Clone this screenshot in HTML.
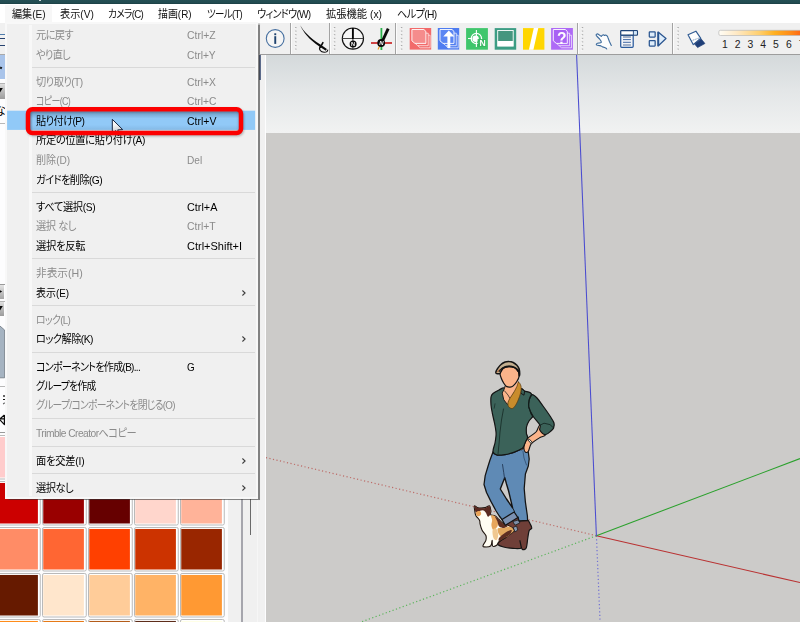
<!DOCTYPE html>
<html lang="ja">
<head>
<meta charset="utf-8">
<title>SketchUp</title>
<style>
*{margin:0;padding:0;box-sizing:border-box}
html,body{width:800px;height:622px;overflow:hidden;background:#f0f0f0}
body{font-family:'Liberation Sans','Noto Sans CJK JP',sans-serif;font-size:11.2px;color:#000;font-feature-settings:'palt';-webkit-font-smoothing:antialiased}
#app{position:absolute;left:0;top:0;width:800px;height:622px;overflow:hidden;background:#f0f0f0}
#app>*,#menu>*,#tb>*{position:absolute}
.r{display:inline-block;white-space:pre;vertical-align:top;overflow:visible}
.r>span{display:inline-block;transform-origin:0 50%;white-space:pre}
#title{left:0;top:0;width:800px;height:3.8px;background:linear-gradient(to bottom,#244f54 0,#224c51 60%,#1b3f44 100%)}
#mbar{left:0;top:4px;width:800px;height:19px;background:#fff}
#mbhot{left:5.3px;top:4.6px;width:46.4px;height:17px;background:#f7f7f7}
.mb{top:5.2px;height:18px;line-height:18px;white-space:nowrap;color:#111}
#tb{left:0;top:0;width:800px;height:60px}
#tbbg{left:0;top:22.8px;width:800px;height:31.4px;background:#f0f0f0}
#tbline{left:260px;top:53.9px;width:540px;height:1px;background:#9d9d9d}
.tsep{top:23.2px;width:2px;height:30.6px;border-left:1px solid #a3a3a3;border-right:1px solid #fcfcfc}
.grip{top:26.5px;width:1.8px;height:24px;background:repeating-linear-gradient(to bottom,#b8b8b8 0 1.3px,transparent 1.3px 3.55px)}
.num{top:38.5px;width:10px;text-align:center;font-size:10.4px;line-height:12px;color:#222;font-family:'Liberation Sans',sans-serif}
#vp{left:265.4px;top:55px;width:534.6px;height:567px;background:#cccbc9}
#sky{left:265.4px;top:55px;width:534.6px;height:78px;background:linear-gradient(to bottom,#d4d9db 0%,#e3e6e7 45%,#f1f2f2 100%)}
#scene{left:0;top:0;width:800px;height:622px}
#lp{left:0;top:23px;width:266px;height:599px;background:#fdfdfe}
#menu{left:4.6px;top:22.4px;width:253.5px;height:476.6px;background:#f0f0f0;border:2.5px solid #f8f8f8;box-shadow:2.3px 1.4px 1px rgba(50,50,50,.58)}
#mlayer{left:0;top:0;width:800px;height:622px;pointer-events:none}
#mlayer>*{position:absolute}
#gut{left:29.2px;top:25px;width:2.8px;height:471px;background:#f8f8f8}
.mi{height:18px;line-height:18px;white-space:nowrap;color:#000}
.mi.dis{color:#8b8b8b}
.sep{left:32px;width:223px;height:1.2px;background:#d9d9d9}
.arr{overflow:visible}
#hl{left:0;top:0;width:270px;height:140px}

</style>
</head>
<body>
<div id="app">
<div id="vp"></div>
<div id="sky"></div>
<svg id="scene" viewBox="0 0 800 622" width="800" height="622">
<g fill="none" stroke-linecap="butt">
<line x1="596.4" y1="535.7" x2="265.4" y2="457.5" stroke="#bd6e6a" stroke-width="1.2" stroke-dasharray="1.2 2.4"/>
<line x1="596.4" y1="535.7" x2="360" y2="622.4" stroke="#5ab45a" stroke-width="1.2" stroke-dasharray="1.2 2.4"/>
<line x1="596.4" y1="535.7" x2="600.1" y2="622" stroke="#7070d4" stroke-width="1.2" stroke-dasharray="1.2 2.4"/>
<line x1="596.4" y1="535.7" x2="800" y2="582.6" stroke="#b93232" stroke-width="1.05"/>
<line x1="596.4" y1="535.7" x2="800" y2="458.6" stroke="#2aa12c" stroke-width="1.05"/>
<line x1="576.6" y1="55" x2="596.4" y2="535.7" stroke="#4a4cd0" stroke-width="1.05"/>
</g>

<path d="M498.5 542.5 C499.7 541.4 502.6 539.3 505.0 538.0 C507.4 536.7 510.8 535.6 513.0 534.8 C515.2 534.0 517.2 532.1 518.5 533.0 C519.8 533.9 520.5 537.5 521.0 540.0 C521.5 542.5 522.8 546.4 521.5 547.8 C520.2 549.2 516.0 548.5 513.0 548.4 C510.0 548.3 506.0 547.6 503.5 547.0 C501.0 546.4 498.8 545.5 498.0 544.8 C497.2 544.0 497.3 543.6 498.5 542.5 Z" fill="#6f3f38" stroke="#141414" stroke-width="1.2" stroke-linejoin="round" stroke-linecap="round"/>
<path d="M517.0 525.5 C517.2 523.4 517.8 522.0 519.5 521.0 C521.2 520.0 525.4 519.3 527.2 519.8 C529.0 520.3 529.4 522.6 530.2 524.0 C531.0 525.4 532.0 527.1 531.8 528.2 C531.6 529.3 529.9 528.8 529.2 530.4 C528.5 532.0 528.3 535.1 527.8 538.0 C527.3 540.9 527.1 546.1 526.2 548.0 C525.3 549.9 523.1 549.9 522.2 549.2 C521.3 548.5 521.2 546.6 520.6 544.0 C520.0 541.4 519.0 536.6 518.4 533.5 C517.8 530.4 516.8 527.6 517.0 525.5 Z" fill="#6f3f38" stroke="#141414" stroke-width="1.2" stroke-linejoin="round" stroke-linecap="round"/>
<polygon points="505.0,538.0 507.0,528.0 505.0,523.0 512.8,518.0 519.5,518.0 522.0,528.0 521.0,540.0 513.0,542.0" fill="#6f3f38" />
<polygon points="512.8,521.5 519.0,519.8 519.8,523.0 515.0,525.2" fill="#7d8fa8" stroke="#141414" stroke-width="0.72" stroke-linejoin="round"/>
<polygon points="513.2,527.5 516.5,526.0 517.8,530.0 514.8,532.0" fill="#8a9bb2" stroke="#141414" stroke-width="0.72" stroke-linejoin="round"/>
<path d="M474.4 505.8 C475.0 505.3 476.4 507.6 478.2 507.9 C480.0 508.2 483.2 508.0 485.1 507.6 C487.0 507.3 488.5 505.1 489.5 505.8 C490.5 506.4 490.7 509.9 490.9 511.4 C491.0 512.9 489.7 513.9 490.4 514.7 C491.1 515.4 493.7 515.1 495.2 515.9 C496.6 516.8 497.8 518.5 499.2 519.7 C500.5 520.9 501.3 522.1 503.2 523.2 C505.0 524.3 508.4 525.2 510.2 526.5 C512.0 527.7 514.0 529.2 514.0 530.5 C514.0 531.8 511.7 533.0 510.2 534.2 C508.7 535.5 507.0 536.5 505.2 537.8 C503.3 539.0 500.6 540.3 499.2 541.5 C497.7 542.8 497.7 544.5 496.7 545.3 C495.6 546.0 493.4 546.9 492.6 546.0 C491.9 545.2 492.5 540.3 492.1 540.3 C491.8 540.3 492.0 544.9 490.6 546.0 C489.3 547.1 485.4 547.0 484.1 546.9 C482.9 546.8 482.8 546.4 483.1 545.3 C483.4 544.2 485.4 541.9 485.9 540.3 C486.3 538.6 486.5 537.2 485.9 535.5 C485.2 533.8 483.1 532.1 482.1 530.2 C481.1 528.3 480.5 525.9 480.1 524.2 C479.7 522.5 480.2 521.7 479.5 520.2 C478.8 518.7 476.6 517.1 475.8 515.4 C475.0 513.8 474.9 512.0 474.7 510.4 C474.5 508.8 473.9 506.2 474.4 505.8 Z" fill="#fffdf2" stroke="#1e140e" stroke-width="1.08" stroke-linejoin="round" stroke-linecap="round"/>
<path d="M474.8 506.1 C475.2 505.4 476.6 507.9 478.3 508.1 C480.1 508.4 483.3 508.2 485.1 507.9 C487.0 507.6 488.5 505.5 489.4 506.1 C490.3 506.7 490.5 510.0 490.6 511.4 C490.8 512.8 490.6 513.8 490.1 514.7 C489.7 515.5 488.6 517.0 487.9 516.7 C487.2 516.3 486.6 513.7 485.9 512.7 C485.1 511.6 484.4 510.7 483.4 510.4 C482.3 510.1 480.8 510.6 479.6 510.9 C478.3 511.2 476.6 513.2 475.8 512.4 C475.0 511.6 474.4 506.8 474.8 506.1 Z" fill="#5a2a20" />
<path d="M476.1 512.2 C476.7 511.5 479.3 510.8 480.1 511.2 C480.9 511.5 481.3 513.3 481.1 514.2 C480.9 515.0 479.6 516.0 478.8 516.2 C478.1 516.3 477.0 515.8 476.6 515.2 C476.1 514.5 475.5 512.8 476.1 512.2 Z" fill="#eaa458" />
<path d="M491.1 515.4 C491.7 514.8 494.3 515.4 495.4 516.4 C496.5 517.4 497.6 519.7 497.9 521.4 C498.2 523.2 497.9 525.3 497.2 526.7 C496.4 528.1 494.4 530.2 493.4 530.0 C492.4 529.7 491.6 526.8 491.4 525.2 C491.2 523.6 492.2 521.8 492.1 520.2 C492.1 518.6 490.6 516.0 491.1 515.4 Z" fill="#e8a65c" />
<path d="M494.9 516.2 C495.2 515.9 497.8 518.7 499.2 519.9 C500.5 521.2 501.8 522.5 503.2 523.5 C504.6 524.4 507.5 525.0 507.7 525.7 C507.9 526.5 505.6 527.8 504.2 528.0 C502.8 528.1 500.3 527.5 499.2 526.5 C498.0 525.4 498.1 523.2 497.4 521.4 C496.7 519.7 494.6 516.4 494.9 516.2 Z" fill="#5e2e22" />
<path d="M497.7 528.7 C498.4 527.5 502.1 528.3 504.2 528.0 C506.3 527.6 508.6 526.3 510.2 526.7 C511.8 527.1 513.7 529.3 513.7 530.5 C513.7 531.7 511.6 532.9 510.2 534.0 C508.8 535.1 506.9 537.0 505.2 537.3 C503.4 537.5 500.9 536.7 499.7 535.2 C498.4 533.8 496.9 529.9 497.7 528.7 Z" fill="#e2a860" />
<path d="M499.2 537.8 C500.1 536.4 503.1 534.0 505.2 532.7 C507.2 531.4 510.6 529.8 511.5 530.0 C512.3 530.2 511.3 532.7 510.2 534.0 C509.2 535.2 507.0 536.3 505.2 537.5 C503.4 538.7 500.4 541.0 499.4 541.0 C498.4 541.1 498.2 539.1 499.2 537.8 Z" fill="#5e2e22" />
<path d="M492.6 530.2 C493.1 528.8 495.5 528.1 496.4 529.0 C497.3 529.8 498.2 533.4 498.2 535.2 C498.2 537.1 497.2 539.8 496.4 540.3 C495.6 540.7 494.0 539.4 493.4 537.8 C492.8 536.1 492.1 531.7 492.6 530.2 Z" fill="#f0c890" />
<polygon points="493.0,452.0 490.0,460.0 488.1,466.0 485.2,475.6 484.0,484.5 486.5,492.5 490.9,501.4 496.1,511.0 499.3,516.0 502.5,520.2 506.0,523.6 518.0,517.0 519.0,521.0 527.6,520.5 527.4,516.0 525.4,502.2 524.2,488.5 525.4,474.0 528.3,466.0 529.2,459.0 528.2,451.5 523.0,447.6 520.0,449.6 513.0,452.6 505.0,454.6 497.0,455.0" fill="#5f8ab5" stroke="#141414" stroke-width="1.26" stroke-linejoin="round"/>
<polygon points="504.8,477.6 500.3,489.0 506.5,499.0 512.6,507.8 508.6,491.0 506.5,484.0" fill="#cccbc9" stroke="#141414" stroke-width="1.38" stroke-linejoin="round"/>
<polyline points="502.5,464.5 503.7,472.4 504.5,478.1" fill="none" stroke="#1b2f4a" stroke-width="0.8" stroke-linejoin="round" stroke-linecap="round"/>
<polyline points="512.6,507.8 514.5,511.5" fill="none" stroke="#141414" stroke-width="0.9" stroke-linejoin="round" stroke-linecap="round"/>
<polyline points="523.0,451.5 524.0,458.0 526.5,465.0" fill="none" stroke="#2a4566" stroke-width="0.7" stroke-linejoin="round" stroke-linecap="round"/>
<polygon points="502.0,519.6 514.1,511.9 517.9,517.6 505.3,525.3" fill="#7b91b1" stroke="#141414" stroke-width="1.14" stroke-linejoin="round"/>
<path d="M540.0 425.2 C541.6 425.6 545.5 432.4 545.5 434.5 C545.5 436.6 542.2 436.1 540.0 437.5 C537.8 438.9 533.7 441.5 532.0 443.0 C530.3 444.5 530.6 445.1 530.0 446.5 C529.4 447.9 529.0 450.6 528.2 451.5 C527.5 452.4 526.2 452.6 525.5 452.2 C524.8 451.8 524.1 450.4 524.0 449.0 C523.9 447.6 524.0 445.8 524.6 444.0 C525.2 442.2 525.6 440.5 527.5 438.5 C529.4 436.5 533.9 434.2 536.0 432.0 C538.1 429.8 538.4 424.8 540.0 425.2 Z" fill="#fbb48a" stroke="#141414" stroke-width="1.08" stroke-linejoin="round" stroke-linecap="round"/>
<polygon points="527.8,439.8 529.0,438.8 532.2,442.2 531.0,443.4" fill="#efe9dc" stroke="#141414" stroke-width="0.84" stroke-linejoin="round"/>
<path d="M519.8 447.8 C519.9 447.4 520.7 447.1 521.2 447.2 C521.7 447.3 522.6 448.0 522.8 448.4 C523.0 448.8 522.8 449.6 522.4 449.8 C522.0 450.0 520.9 449.9 520.5 449.6 C520.1 449.3 519.7 448.2 519.8 447.8 Z" fill="#fbb48a" stroke="#141414" stroke-width="0.72" stroke-linejoin="round" stroke-linecap="round"/>
<path d="M504.5 388.0 C502.2 387.5 500.9 389.1 499.0 390.0 C497.1 390.9 494.3 392.3 493.0 393.5 C491.7 394.7 491.3 395.1 491.0 397.0 C490.7 398.9 490.8 402.2 491.0 405.0 C491.2 407.8 491.9 411.0 492.5 414.0 C493.1 417.0 493.9 420.0 494.5 423.0 C495.1 426.0 495.8 429.8 496.0 432.0 C496.2 434.2 496.2 434.2 496.0 436.0 C495.8 437.8 495.5 440.4 495.0 443.0 C494.5 445.6 492.7 449.6 493.0 451.6 C493.3 453.6 495.0 454.5 497.0 455.0 C499.0 455.5 502.3 455.0 505.0 454.6 C507.7 454.2 510.5 453.4 513.0 452.6 C515.5 451.8 518.3 450.4 520.0 449.6 C521.7 448.8 522.1 448.9 523.0 447.6 C523.9 446.3 524.8 443.6 525.5 442.0 C526.2 440.4 527.2 439.2 527.5 438.0 C527.8 436.8 527.2 435.7 527.0 435.0 C526.8 434.3 526.6 435.3 526.5 434.0 C526.4 432.7 526.1 429.2 526.5 427.0 C526.9 424.8 527.9 422.8 529.0 421.0 C530.1 419.2 532.7 417.3 533.0 416.0 C533.3 414.7 531.2 416.5 531.0 413.0 C530.8 409.5 533.1 398.7 532.0 395.0 C530.9 391.3 526.3 392.1 524.5 391.0 C522.7 389.9 522.9 388.2 521.0 388.5 C519.1 388.8 515.8 393.1 513.0 393.0 C510.2 392.9 506.8 388.5 504.5 388.0 Z" fill="#3b6259" stroke="#141414" stroke-width="1.2" stroke-linejoin="round" stroke-linecap="round"/>
<path d="M532.0 394.6 C533.3 394.3 535.2 396.1 537.0 398.0 C538.8 399.9 540.8 403.0 543.0 406.0 C545.2 409.0 548.2 413.2 550.0 416.0 C551.8 418.8 553.4 421.0 554.0 423.0 C554.6 425.0 554.1 426.7 553.6 428.0 C553.1 429.3 552.4 429.9 551.0 431.0 C549.6 432.1 547.1 434.8 545.2 434.6 C543.3 434.4 540.7 431.6 539.8 430.0 C538.9 428.4 541.1 427.5 540.0 425.2 C538.9 422.9 534.9 419.2 533.0 416.2 C531.1 413.2 529.4 409.7 528.8 407.0 C528.2 404.3 528.7 402.1 529.2 400.0 C529.7 397.9 530.7 394.9 532.0 394.6 Z" fill="#3b6259" stroke="#141414" stroke-width="1.2" stroke-linejoin="round" stroke-linecap="round"/>
<polyline points="540.0,425.2 544.0,423.2 550.0,424.6 553.6,428.0" fill="none" stroke="#10211d" stroke-width="0.8" stroke-linejoin="round" stroke-linecap="round"/>
<polyline points="532.0,395.0 529.0,400.0 528.5,407.0 531.0,413.0 533.0,416.0" fill="none" stroke="#10211d" stroke-width="0.8" stroke-linejoin="round" stroke-linecap="round"/>
<polyline points="503.5,409.0 501.5,420.0 500.0,432.0 499.2,442.0 498.0,454.0" fill="none" stroke="#10211d" stroke-width="0.7" stroke-linejoin="round" stroke-linecap="round"/>
<polyline points="495.0,403.8 494.2,408.2" fill="none" stroke="#10211d" stroke-width="0.6" stroke-linejoin="round" stroke-linecap="round"/>
<polygon points="505.0,386.0 513.5,386.8 518.0,381.0 519.8,389.0 514.5,391.0 510.0,398.5 507.2,404.2 503.8,399.8 502.2,393.0 504.5,388.5" fill="#fbb48a" />
<polyline points="505.0,386.2 504.5,388.5 502.2,393.0 503.8,399.8 507.2,404.2" fill="none" stroke="#141414" stroke-width="0.9" stroke-linejoin="round" stroke-linecap="round"/>
<polyline points="504.5,390.8 508.0,395.0 510.0,398.5" fill="none" stroke="#141414" stroke-width="0.7" stroke-linejoin="round" stroke-linecap="round"/>
<polygon points="521.0,388.5 524.6,391.0 524.0,395.2 520.8,393.2" fill="#3b6259" stroke="#141414" stroke-width="0.96" stroke-linejoin="round"/>
<path d="M518.5 382.0 C519.2 382.0 520.6 384.4 521.0 386.2 C521.4 388.0 521.1 390.7 520.6 393.0 C520.1 395.3 519.1 397.9 518.2 400.0 C517.3 402.1 516.2 404.4 515.2 405.8 C514.2 407.2 513.1 408.5 512.0 408.6 C510.9 408.7 509.3 407.6 508.6 406.6 C507.9 405.6 507.8 404.0 508.0 402.6 C508.2 401.2 509.0 400.0 510.0 398.2 C511.0 396.4 512.8 394.0 514.0 392.0 C515.2 390.0 516.2 387.9 517.0 386.2 C517.8 384.5 517.8 382.0 518.5 382.0 Z" fill="#c98c2c" stroke="#5a3a10" stroke-width="0.72" stroke-linejoin="round" stroke-linecap="round"/>
<path d="M500.1 373.2 C499.7 374.9 500.7 376.5 501.3 378.2 C501.9 379.9 503.0 381.9 503.8 383.2 C504.7 384.6 505.3 385.7 506.3 386.4 C507.4 387.0 508.9 387.2 510.1 387.1 C511.2 387.0 512.1 386.8 513.2 385.9 C514.4 384.9 516.0 383.0 517.0 381.3 C518.0 379.7 519.0 377.5 519.2 375.7 C519.4 373.9 519.0 372.0 518.2 370.7 C517.5 369.3 516.1 368.2 514.5 367.5 C512.9 366.9 510.7 366.5 508.8 366.6 C507.0 366.7 504.7 367.1 503.2 368.2 C501.7 369.3 500.4 371.5 500.1 373.2 Z" fill="#fbb48a" stroke="#141414" stroke-width="1.2" stroke-linejoin="round" stroke-linecap="round"/>
<path d="M495.8 372.4 C495.8 371.6 496.7 370.0 497.5 368.7 C498.4 367.4 499.4 365.8 500.7 364.7 C501.9 363.6 503.7 362.6 505.1 362.0 C506.5 361.5 507.8 361.4 509.2 361.5 C510.5 361.5 511.9 361.9 513.2 362.5 C514.5 363.2 515.9 364.3 516.9 365.3 C517.8 366.3 518.6 367.3 519.1 368.7 C519.5 370.1 519.7 372.6 519.7 373.8 C519.7 375.0 519.4 376.2 519.2 375.7 C519.0 375.2 519.0 372.0 518.2 370.7 C517.5 369.3 516.1 368.2 514.5 367.5 C512.9 366.9 510.7 366.5 508.8 366.6 C507.0 366.7 504.7 367.1 503.2 368.2 C501.7 369.3 501.0 372.3 500.1 373.2 C499.1 374.1 498.3 373.9 497.5 373.8 C496.8 373.7 495.8 373.3 495.8 372.4 Z" fill="#c4b090" stroke="#141414" stroke-width="1.5" stroke-linejoin="round" stroke-linecap="round"/>
<path d="M499.1 371.4 C499.8 370.8 501.5 368.4 503.2 367.5 C504.9 366.7 507.3 366.2 509.2 366.2 C511.0 366.2 513.0 366.7 514.5 367.5 C515.9 368.4 517.4 370.8 517.9 371.4" fill="none" stroke="#141414" stroke-width="1.2" stroke-linejoin="round" stroke-linecap="round"/>
<polyline points="497.2,372.1 499.7,369.1" fill="none" stroke="#b5683a" stroke-width="1.0" stroke-linejoin="round" stroke-linecap="round"/>
</svg>
<div id="lp"></div>
<svg style="left:0;top:0" width="266" height="622" viewBox="0 0 266 622">
<rect x="-3.50" y="435.50" width="43.75" height="43.5" rx="1.6" fill="#fff" stroke="#b9b9b9" stroke-width="1"/>
<rect x="-2.75" y="436.95" width="40.65" height="40.55" fill="#ffcccc"/>
<rect x="42.50" y="435.50" width="43.75" height="43.5" rx="1.6" fill="#fff" stroke="#b9b9b9" stroke-width="1"/>
<rect x="43.25" y="436.95" width="40.65" height="40.55" fill="#ff9999"/>
<rect x="88.50" y="435.50" width="43.75" height="43.5" rx="1.6" fill="#fff" stroke="#b9b9b9" stroke-width="1"/>
<rect x="89.25" y="436.95" width="40.65" height="40.55" fill="#ff6666"/>
<rect x="134.50" y="435.50" width="43.75" height="43.5" rx="1.6" fill="#fff" stroke="#b9b9b9" stroke-width="1"/>
<rect x="135.25" y="436.95" width="40.65" height="40.55" fill="#ff3333"/>
<rect x="180.50" y="435.50" width="43.75" height="43.5" rx="1.6" fill="#fff" stroke="#b9b9b9" stroke-width="1"/>
<rect x="181.25" y="436.95" width="40.65" height="40.55" fill="#ff0000"/>
<rect x="-3.50" y="481.50" width="43.75" height="43.5" rx="1.6" fill="#fff" stroke="#b9b9b9" stroke-width="1"/>
<rect x="-2.75" y="482.95" width="40.65" height="40.55" fill="#cc0000"/>
<rect x="42.50" y="481.50" width="43.75" height="43.5" rx="1.6" fill="#fff" stroke="#b9b9b9" stroke-width="1"/>
<rect x="43.25" y="482.95" width="40.65" height="40.55" fill="#990000"/>
<rect x="88.50" y="481.50" width="43.75" height="43.5" rx="1.6" fill="#fff" stroke="#b9b9b9" stroke-width="1"/>
<rect x="89.25" y="482.95" width="40.65" height="40.55" fill="#660000"/>
<rect x="134.50" y="481.50" width="43.75" height="43.5" rx="1.6" fill="#fff" stroke="#b9b9b9" stroke-width="1"/>
<rect x="135.25" y="482.95" width="40.65" height="40.55" fill="#ffd6cc"/>
<rect x="180.50" y="481.50" width="43.75" height="43.5" rx="1.6" fill="#fff" stroke="#b9b9b9" stroke-width="1"/>
<rect x="181.25" y="482.95" width="40.65" height="40.55" fill="#ffb399"/>
<rect x="-3.50" y="527.50" width="43.75" height="43.5" rx="1.6" fill="#fff" stroke="#b9b9b9" stroke-width="1"/>
<rect x="-2.75" y="528.95" width="40.65" height="40.55" fill="#ff8c66"/>
<rect x="42.50" y="527.50" width="43.75" height="43.5" rx="1.6" fill="#fff" stroke="#b9b9b9" stroke-width="1"/>
<rect x="43.25" y="528.95" width="40.65" height="40.55" fill="#ff6633"/>
<rect x="88.50" y="527.50" width="43.75" height="43.5" rx="1.6" fill="#fff" stroke="#b9b9b9" stroke-width="1"/>
<rect x="89.25" y="528.95" width="40.65" height="40.55" fill="#ff4000"/>
<rect x="134.50" y="527.50" width="43.75" height="43.5" rx="1.6" fill="#fff" stroke="#b9b9b9" stroke-width="1"/>
<rect x="135.25" y="528.95" width="40.65" height="40.55" fill="#cc3300"/>
<rect x="180.50" y="527.50" width="43.75" height="43.5" rx="1.6" fill="#fff" stroke="#b9b9b9" stroke-width="1"/>
<rect x="181.25" y="528.95" width="40.65" height="40.55" fill="#992600"/>
<rect x="-3.50" y="573.50" width="43.75" height="43.5" rx="1.6" fill="#fff" stroke="#b9b9b9" stroke-width="1"/>
<rect x="-2.75" y="574.95" width="40.65" height="40.55" fill="#661a00"/>
<rect x="42.50" y="573.50" width="43.75" height="43.5" rx="1.6" fill="#fff" stroke="#b9b9b9" stroke-width="1"/>
<rect x="43.25" y="574.95" width="40.65" height="40.55" fill="#ffe6cc"/>
<rect x="88.50" y="573.50" width="43.75" height="43.5" rx="1.6" fill="#fff" stroke="#b9b9b9" stroke-width="1"/>
<rect x="89.25" y="574.95" width="40.65" height="40.55" fill="#ffcc99"/>
<rect x="134.50" y="573.50" width="43.75" height="43.5" rx="1.6" fill="#fff" stroke="#b9b9b9" stroke-width="1"/>
<rect x="135.25" y="574.95" width="40.65" height="40.55" fill="#ffb366"/>
<rect x="180.50" y="573.50" width="43.75" height="43.5" rx="1.6" fill="#fff" stroke="#b9b9b9" stroke-width="1"/>
<rect x="181.25" y="574.95" width="40.65" height="40.55" fill="#ff9933"/>
<rect x="-3.50" y="619.50" width="43.75" height="43.5" rx="1.6" fill="#fff" stroke="#b9b9b9" stroke-width="1"/>
<rect x="-2.75" y="620.95" width="40.65" height="40.55" fill="#ff8c1a"/>
<rect x="42.50" y="619.50" width="43.75" height="43.5" rx="1.6" fill="#fff" stroke="#b9b9b9" stroke-width="1"/>
<rect x="43.25" y="620.95" width="40.65" height="40.55" fill="#e67a17"/>
<rect x="88.50" y="619.50" width="43.75" height="43.5" rx="1.6" fill="#fff" stroke="#b9b9b9" stroke-width="1"/>
<rect x="89.25" y="620.95" width="40.65" height="40.55" fill="#b35c1a"/>
<rect x="134.50" y="619.50" width="43.75" height="43.5" rx="1.6" fill="#fff" stroke="#b9b9b9" stroke-width="1"/>
<rect x="135.25" y="620.95" width="40.65" height="40.55" fill="#5e2d1a"/>
<rect x="180.50" y="619.50" width="43.75" height="43.5" rx="1.6" fill="#fff" stroke="#b9b9b9" stroke-width="1"/>
<rect x="181.25" y="620.95" width="40.65" height="40.55" fill="#ffffe6"/>
</svg>
<div id="title"></div>
<div style="left:39.4px;top:0;width:1.6px;height:0.9px;background:#cfd8d9"></div>
<div id="mbar"></div>
<div id="mbhot"></div>
<div class="mb" style="left:11.5px"><span class="r" style="width:33.60px"><span style="transform:scaleX(0.901)">編集(E)</span></span></div>
<div class="mb" style="left:59.5px"><span class="r" style="width:33.90px"><span style="transform:scaleX(0.909)">表示(V)</span></span></div>
<div class="mb" style="left:107.8px"><span class="r" style="width:35.10px"><span style="letter-spacing:-0.80px;transform:scaleX(0.866)">カメラ(C)</span></span></div>
<div class="mb" style="left:157.6px"><span class="r" style="width:33.60px"><span style="transform:scaleX(0.886)">描画(R)</span></span></div>
<div class="mb" style="left:207.0px"><span class="r" style="width:35.00px"><span style="letter-spacing:-0.80px;transform:scaleX(0.848)">ツール(T)</span></span></div>
<div class="mb" style="left:256.5px"><span class="r" style="width:53.50px"><span style="letter-spacing:-0.80px;transform:scaleX(0.904)">ウィンドウ(W)</span></span></div>
<div class="mb" style="left:325.5px"><span class="r" style="width:56.00px"><span style="transform:scaleX(0.919)">拡張機能 (x)</span></span></div>
<div class="mb" style="left:396.8px"><span class="r" style="width:39.60px"><span style="letter-spacing:-0.73px;transform:scaleX(0.915)">ヘルプ(H)</span></span></div>
<div id="tbbg"></div>
<div id="tb">
<div class="tsep" style="left:289.8px"></div>
<div class="tsep" style="left:328.9px"></div>
<div class="tsep" style="left:395.1px"></div>
<div class="tsep" style="left:576.8px"></div>
<div class="tsep" style="left:672.3px"></div>
<svg style="left:0;top:0" width="800" height="60" viewBox="0 0 800 60"><rect x="295.10" y="27.00" width="1.4" height="1.1" fill="#a9a9a9"/><rect x="294.40" y="28.00" width="1.3" height="0.9" fill="#fbfbfb"/><rect x="295.10" y="30.60" width="1.4" height="1.1" fill="#a9a9a9"/><rect x="294.40" y="31.60" width="1.3" height="0.9" fill="#fbfbfb"/><rect x="295.10" y="34.20" width="1.4" height="1.1" fill="#a9a9a9"/><rect x="294.40" y="35.20" width="1.3" height="0.9" fill="#fbfbfb"/><rect x="295.10" y="37.80" width="1.4" height="1.1" fill="#a9a9a9"/><rect x="294.40" y="38.80" width="1.3" height="0.9" fill="#fbfbfb"/><rect x="295.10" y="41.40" width="1.4" height="1.1" fill="#a9a9a9"/><rect x="294.40" y="42.40" width="1.3" height="0.9" fill="#fbfbfb"/><rect x="295.10" y="45.00" width="1.4" height="1.1" fill="#a9a9a9"/><rect x="294.40" y="46.00" width="1.3" height="0.9" fill="#fbfbfb"/><rect x="295.10" y="48.60" width="1.4" height="1.1" fill="#a9a9a9"/><rect x="294.40" y="49.60" width="1.3" height="0.9" fill="#fbfbfb"/></svg>
<svg style="left:0;top:0" width="800" height="60" viewBox="0 0 800 60"><rect x="333.90" y="27.00" width="1.4" height="1.1" fill="#a9a9a9"/><rect x="333.20" y="28.00" width="1.3" height="0.9" fill="#fbfbfb"/><rect x="333.90" y="30.60" width="1.4" height="1.1" fill="#a9a9a9"/><rect x="333.20" y="31.60" width="1.3" height="0.9" fill="#fbfbfb"/><rect x="333.90" y="34.20" width="1.4" height="1.1" fill="#a9a9a9"/><rect x="333.20" y="35.20" width="1.3" height="0.9" fill="#fbfbfb"/><rect x="333.90" y="37.80" width="1.4" height="1.1" fill="#a9a9a9"/><rect x="333.20" y="38.80" width="1.3" height="0.9" fill="#fbfbfb"/><rect x="333.90" y="41.40" width="1.4" height="1.1" fill="#a9a9a9"/><rect x="333.20" y="42.40" width="1.3" height="0.9" fill="#fbfbfb"/><rect x="333.90" y="45.00" width="1.4" height="1.1" fill="#a9a9a9"/><rect x="333.20" y="46.00" width="1.3" height="0.9" fill="#fbfbfb"/><rect x="333.90" y="48.60" width="1.4" height="1.1" fill="#a9a9a9"/><rect x="333.20" y="49.60" width="1.3" height="0.9" fill="#fbfbfb"/></svg>
<svg style="left:0;top:0" width="800" height="60" viewBox="0 0 800 60"><rect x="400.90" y="27.00" width="1.4" height="1.1" fill="#a9a9a9"/><rect x="400.20" y="28.00" width="1.3" height="0.9" fill="#fbfbfb"/><rect x="400.90" y="30.60" width="1.4" height="1.1" fill="#a9a9a9"/><rect x="400.20" y="31.60" width="1.3" height="0.9" fill="#fbfbfb"/><rect x="400.90" y="34.20" width="1.4" height="1.1" fill="#a9a9a9"/><rect x="400.20" y="35.20" width="1.3" height="0.9" fill="#fbfbfb"/><rect x="400.90" y="37.80" width="1.4" height="1.1" fill="#a9a9a9"/><rect x="400.20" y="38.80" width="1.3" height="0.9" fill="#fbfbfb"/><rect x="400.90" y="41.40" width="1.4" height="1.1" fill="#a9a9a9"/><rect x="400.20" y="42.40" width="1.3" height="0.9" fill="#fbfbfb"/><rect x="400.90" y="45.00" width="1.4" height="1.1" fill="#a9a9a9"/><rect x="400.20" y="46.00" width="1.3" height="0.9" fill="#fbfbfb"/><rect x="400.90" y="48.60" width="1.4" height="1.1" fill="#a9a9a9"/><rect x="400.20" y="49.60" width="1.3" height="0.9" fill="#fbfbfb"/></svg>
<svg style="left:0;top:0" width="800" height="60" viewBox="0 0 800 60"><rect x="581.80" y="27.00" width="1.4" height="1.1" fill="#a9a9a9"/><rect x="581.10" y="28.00" width="1.3" height="0.9" fill="#fbfbfb"/><rect x="581.80" y="30.60" width="1.4" height="1.1" fill="#a9a9a9"/><rect x="581.10" y="31.60" width="1.3" height="0.9" fill="#fbfbfb"/><rect x="581.80" y="34.20" width="1.4" height="1.1" fill="#a9a9a9"/><rect x="581.10" y="35.20" width="1.3" height="0.9" fill="#fbfbfb"/><rect x="581.80" y="37.80" width="1.4" height="1.1" fill="#a9a9a9"/><rect x="581.10" y="38.80" width="1.3" height="0.9" fill="#fbfbfb"/><rect x="581.80" y="41.40" width="1.4" height="1.1" fill="#a9a9a9"/><rect x="581.10" y="42.40" width="1.3" height="0.9" fill="#fbfbfb"/><rect x="581.80" y="45.00" width="1.4" height="1.1" fill="#a9a9a9"/><rect x="581.10" y="46.00" width="1.3" height="0.9" fill="#fbfbfb"/><rect x="581.80" y="48.60" width="1.4" height="1.1" fill="#a9a9a9"/><rect x="581.10" y="49.60" width="1.3" height="0.9" fill="#fbfbfb"/></svg>
<svg style="left:0;top:0" width="800" height="60" viewBox="0 0 800 60"><rect x="677.40" y="27.00" width="1.4" height="1.1" fill="#a9a9a9"/><rect x="676.70" y="28.00" width="1.3" height="0.9" fill="#fbfbfb"/><rect x="677.40" y="30.60" width="1.4" height="1.1" fill="#a9a9a9"/><rect x="676.70" y="31.60" width="1.3" height="0.9" fill="#fbfbfb"/><rect x="677.40" y="34.20" width="1.4" height="1.1" fill="#a9a9a9"/><rect x="676.70" y="35.20" width="1.3" height="0.9" fill="#fbfbfb"/><rect x="677.40" y="37.80" width="1.4" height="1.1" fill="#a9a9a9"/><rect x="676.70" y="38.80" width="1.3" height="0.9" fill="#fbfbfb"/><rect x="677.40" y="41.40" width="1.4" height="1.1" fill="#a9a9a9"/><rect x="676.70" y="42.40" width="1.3" height="0.9" fill="#fbfbfb"/><rect x="677.40" y="45.00" width="1.4" height="1.1" fill="#a9a9a9"/><rect x="676.70" y="46.00" width="1.3" height="0.9" fill="#fbfbfb"/><rect x="677.40" y="48.60" width="1.4" height="1.1" fill="#a9a9a9"/><rect x="676.70" y="49.60" width="1.3" height="0.9" fill="#fbfbfb"/></svg>
<svg style="left:0;top:0" width="800" height="60" viewBox="0 0 800 60">
<defs>
<linearGradient id="gbar" x1="0" x2="1" y1="0" y2="0"><stop offset="0" stop-color="#fffdf6"/><stop offset=".2" stop-color="#ffe9c4"/><stop offset=".45" stop-color="#ffcf6e"/><stop offset=".62" stop-color="#ffb020"/><stop offset=".8" stop-color="#ff8a18"/><stop offset="1" stop-color="#ff4a10"/></linearGradient>
</defs>
<!-- info -->
<circle cx="275.2" cy="38.5" r="8.9" fill="#f5f5f5" stroke="#4770a0" stroke-width="1.1"/>
<rect x="274.3" y="36.2" width="1.9" height="7.7" fill="#1f426e"/>
<rect x="274.3" y="33.3" width="1.9" height="1.9" fill="#1f426e"/>
<!-- sword -->
<path d="M300.2 25.3 C303.8 31.5 309.5 37.6 320.4 44.6 L326.9 49 L325.8 50.8 L319.4 46.6 C308.6 39.2 303.5 32.5 300.2 25.3 Z" fill="#0a0a0a"/>
<path d="M322.9 42.6 L320.3 47.4" stroke="#0a0a0a" stroke-width="1.6" fill="none" stroke-linecap="round"/>
<path d="M320 46.6 C318.6 49.6 320.6 52.2 324.2 52.2 C326.6 52.2 327.9 51.4 327.7 49.6" stroke="#0a0a0a" stroke-width="1.1" fill="none"/>
<!-- compass -->
<circle cx="352.9" cy="38.6" r="10.6" fill="#f6f6f6" stroke="#111" stroke-width="1.15"/>
<line x1="342.3" y1="38.5" x2="363.5" y2="38.5" stroke="#333" stroke-width="0.9"/>
<line x1="352.9" y1="28" x2="352.9" y2="39" stroke="#050505" stroke-width="1.9"/>
<line x1="352.9" y1="39" x2="352.9" y2="49.2" stroke="#222" stroke-width="0.9"/>
<circle cx="353.1" cy="43.9" r="3.5" fill="#0a0a0a"/>
<text x="353.1" y="45.9" font-family="'Liberation Sans',sans-serif" font-size="5.6" font-weight="700" fill="#fff" text-anchor="middle" opacity=".99">N</text>
<!-- axes tool -->
<line x1="371" y1="43" x2="392" y2="43" stroke="#c40a0a" stroke-width="1.5"/>
<line x1="381.4" y1="28" x2="381.4" y2="50" stroke="#2bb24a" stroke-width="1.8"/>
<line x1="378" y1="49.5" x2="384" y2="37" stroke="#f29a1a" stroke-width="1.1"/>
<line x1="382" y1="42" x2="388.2" y2="28.6" stroke="#0a0a0a" stroke-width="2.9"/>
<circle cx="381.2" cy="43" r="3.9" fill="#0a0a0a"/>
<text x="381.3" y="45.1" font-family="'Liberation Sans',sans-serif" font-size="6" font-weight="700" font-style="italic" fill="#fff" text-anchor="middle" opacity=".99">N</text>
<!-- red pages -->
<g transform="translate(409.7 28)">
<rect width="21.5" height="21.6" fill="#f26a6a"/>
<path d="M2.2 1.5 H14.2 L16.2 3.4 V15.4 H5.2 L2.2 12.8 Z" fill="#f58c8c" stroke="#fff" stroke-width="0.9" stroke-linejoin="round"/>
<path d="M16.4 5.2 H18.5 V17.7 H8 L5.6 15.5" fill="none" stroke="#fff" stroke-opacity=".85" stroke-width="0.8"/>
<path d="M18.6 7.2 H20.4 V19.8 H10.4 L8.2 17.8" fill="none" stroke="#fff" stroke-opacity=".8" stroke-width="0.8"/>
</g>
<!-- blue arrow -->
<g transform="translate(437.8 28)">
<rect width="21.4" height="21.6" fill="#4f7cf0"/>
<path d="M2.2 1.5 H14.2 L16.2 3.4 V15.4 H5.2 L2.2 12.8 Z" fill="#5b86f3" stroke="#fff" stroke-width="0.9" stroke-linejoin="round"/>
<path d="M16.4 5.2 H18.5 V17.7 H8 L5.6 15.5" fill="none" stroke="#fff" stroke-opacity=".85" stroke-width="0.8"/>
<path d="M18.6 7.2 H20.4 V19.8 H10.4 L8.2 17.8" fill="none" stroke="#fff" stroke-opacity=".8" stroke-width="0.8"/>
<path d="M11 2.6 L16.6 8.6 H12.5 V19.9 H9.6 V8.6 H5.5 Z" fill="#fff"/>
</g>
<!-- green target -->
<g>
<rect x="466.1" y="28.1" width="21.8" height="21.6" fill="#40c66c"/>
<circle cx="476.4" cy="38.5" r="5.2" fill="none" stroke="#fff" stroke-width="1.25"/>
<circle cx="475.6" cy="38.7" r="3.2" fill="#fff"/>
<line x1="468" y1="38.5" x2="472" y2="38.5" stroke="#fff" stroke-width="1.1"/>
<line x1="476.4" y1="30" x2="476.4" y2="47" stroke="#fff" stroke-width="1.1"/>
<path d="M477.6 39 H486 V47 H477.6 Z" fill="#3ab562" opacity=".9"/>
<text x="482.5" y="45.7" font-family="'Liberation Sans',sans-serif" font-size="8.6" font-weight="700" fill="#fff" text-anchor="middle" opacity=".99">N</text>
</g>
<!-- teal frame -->
<g>
<rect x="494.7" y="28.1" width="21.5" height="21.6" fill="#3c9d84"/>
<rect x="497.7" y="30.5" width="15.5" height="15.6" fill="#45967f" stroke="#fff" stroke-width="0.9"/>
<rect x="497.7" y="41" width="15.5" height="5.1" fill="#fff"/>
</g>
<!-- yellow slash -->
<g>
<rect x="523" y="28.1" width="21.4" height="21.6" fill="#ffd600"/>
<path d="M533.8 28.1 H538.3 L533.4 49.7 H528.9 Z" fill="#fff"/>
</g>
<!-- purple help -->
<g transform="translate(551.1 28)">
<rect width="21.8" height="21.7" fill="#ae6af6"/>
<path d="M2.2 1.5 H14.2 L16.2 3.4 V15.4 H5.2 L2.2 12.8 Z" fill="#a862f4" stroke="#fff" stroke-width="0.9" stroke-linejoin="round"/>
<path d="M16.4 5.2 H18.5 V17.7 H8 L5.6 15.5" fill="none" stroke="#fff" stroke-opacity=".85" stroke-width="0.8"/>
<path d="M18.6 7.2 H20.4 V19.8 H10.4 L8.2 17.8" fill="none" stroke="#fff" stroke-opacity=".8" stroke-width="0.8"/>
<text x="10.6" y="15.7" font-family="'Liberation Sans',sans-serif" font-size="15.6" font-weight="700" fill="#fff" text-anchor="middle" opacity=".99">?</text>
</g>
<!-- hand -->
<path d="M611.3 45.4 L609.4 41.5 L608 37.7 C607.6 36.4 607.3 36 606.9 35.8 C606.4 35.2 606 35 605.6 35 C605 35.2 604.7 35.4 604.4 35.4 C604 34.9 603.7 34.8 603.3 34.8 C602.7 35 602.3 35.2 602 35.5 L601.3 36.4 L598.6 34.5 C597.9 33.9 597.4 33.8 597 34 C596.2 34.4 596 34.8 596.1 35.1 C596.3 35.6 596.6 36 597.1 36.5 L599.6 39 L601 41 C601.3 41.7 601.4 42.2 601.2 42.5 L599.8 42.9 L597.5 43.3 C596.7 43.6 596.3 43.9 596.3 44.2 C596.3 44.6 596.4 44.8 596.7 45 L598.4 45.4 L600.9 45.9 L602.5 46.9 L604.6 47.5 L606.1 48.2 L606.7 49" fill="#fdfdfd" stroke="#3b6a9c" stroke-width="1.1" stroke-linejoin="round" stroke-linecap="round"/>
<!-- list -->
<g>
<rect x="620.7" y="35" width="12.5" height="12.3" rx="1" fill="#f3f5f8" stroke="#2a5a9c" stroke-width="1.25"/>
<path d="M623 37.1 H630.9 M623 45 H630.9" stroke="#8b9bb6" stroke-width="1.5"/>
<path d="M623 39.6 H630.9 M623 42.3 H630.9" stroke="#2f5a9c" stroke-width="0.9"/>
<rect x="620.7" y="30.6" width="16.7" height="4.4" rx="0.6" fill="#fff" stroke="#1f4478" stroke-width="1.25"/>
<rect x="633.6" y="31.3" width="3.2" height="3" fill="#cfe6fb"/>
<line x1="633.4" y1="30.6" x2="633.4" y2="35" stroke="#1f4478" stroke-width="0.9"/>
</g>
<!-- squares + play -->
<g fill="#deedfb" stroke="#2a5590" stroke-width="1.25" stroke-linejoin="round">
<rect x="649.3" y="31.85" width="5.85" height="5.2" rx="0.5"/>
<rect x="649.3" y="40.6" width="5.85" height="5.4" rx="0.5"/>
<path d="M658.1 31.9 L666 38.55 L658.1 46 Z"/>
<path d="M658.3 32 V46" stroke-width="1.8" fill="none"/>
</g>
<!-- eraser -->
<g stroke-linejoin="round">
<path d="M688 34.7 L695.9 31.2 L700.8 38.3 L693.2 44.6 Z" fill="#fdfdfd" stroke="#2f5a92" stroke-width="1.15"/>
<path d="M694.6 43.9 L701.2 39 L704.9 43.5 L697.6 47.6 Z" fill="#1f3f78" stroke="#1f3f78" stroke-width="0.7"/>
<path d="M691.3 40.8 L699 38" stroke="#4f78a8" stroke-width="0.7" stroke-dasharray="1.2 0.6" fill="none"/>
</g>
<!-- gradient bar -->
<rect x="718.8" y="30.3" width="90" height="5.2" rx="1.6" fill="url(#gbar)" stroke="#b9b9b9" stroke-width="0.7"/>
</svg>

<div class="num" style="left:719.9px">1</div>
<div class="num" style="left:732.6px">2</div>
<div class="num" style="left:745.4px">3</div>
<div class="num" style="left:758.2px">4</div>
<div class="num" style="left:771.0px">5</div>
<div class="num" style="left:783.8px">6</div>
<div class="num" style="left:796.6px">7</div>
</div>
<div id="tbline"></div>
<div style="left:0;top:22.8px;width:6px;height:32px;background:#f0f0f0"></div>
<div style="left:0;top:33.7px;width:5px;height:1.4px;background:#4f7cab"></div>
<div style="left:0;top:37.7px;width:5px;height:1.6px;background:#26426f"></div>
<div style="left:0;top:44.7px;width:5px;height:1.6px;background:#26426f"></div>
<div style="left:0;top:54.2px;width:5px;height:1.1px;background:#a9a9a9"></div>
<div style="left:0;top:55.3px;width:5px;height:24px;background:#a9c4ea"></div>
<div style="left:0;top:66.8px;width:2px;height:1.8px;background:#111;transform:rotate(30deg)"></div>
<div style="left:0;top:83.2px;width:5px;height:1px;background:#b5b5b5"></div>
<div style="left:0;top:84.3px;width:4.6px;height:14.4px;background:linear-gradient(to bottom,#e0e0e0,#bdbdbd 45%,#9c9c9c)"></div>
<svg style="left:0;top:87px" width="5" height="7" viewBox="0 0 5 7"><path d="M-3 1 H2.8 L-0.1 5.6 Z" fill="#0a0a0a"/></svg>
<div style="left:0;top:102px;width:4.7px;height:18px;overflow:hidden"><span style="position:absolute;left:-6px;top:-0.5px;font-size:12px;line-height:18px;color:#000;white-space:nowrap">な</span></div>
<div style="left:0;top:123.2px;width:5px;height:1px;background:#b8b8b8"></div>
<div style="left:0;top:284.2px;width:5px;height:1px;background:#9a9a9a"></div>
<div style="left:0;top:285.2px;width:4.4px;height:14.3px;background:linear-gradient(to bottom,#e4e4e4,#c4c4c4 50%,#a6a6a6)"></div>
<svg style="left:0;top:288px" width="5" height="7" viewBox="0 0 5 7"><path d="M-2 1.2 L2.2 3.5 L-2 5.8 Z" fill="#0a0a0a"/></svg>
<div style="left:0;top:301px;width:5px;height:1px;background:#b5b5b5"></div>
<div style="left:0;top:302.2px;width:4.4px;height:14.3px;background:linear-gradient(to bottom,#e0e0e0,#bdbdbd 45%,#9c9c9c)"></div>
<svg style="left:0;top:304.6px" width="5" height="7" viewBox="0 0 5 7"><path d="M-3 1 H2.8 L-0.1 5.6 Z" fill="#0a0a0a"/></svg>
<svg style="left:0;top:322px" width="6" height="58" viewBox="0 0 6 58"><path d="M-1 3.2 L4.6 8 V55.8 H-1 Z" fill="#a5b3c1" stroke="#6f7780" stroke-width="0.8"/></svg>
<div style="left:0;top:385.8px;width:5px;height:1px;background:#b8b8b8"></div>
<div style="left:3px;top:395.2px;width:1.6px;height:1.4px;background:#666"></div>
<div style="left:3px;top:399.2px;width:1.6px;height:1.2px;background:#111"></div>
<div style="left:3px;top:403.4px;width:1.6px;height:1.2px;background:#555;transform:rotate(-40deg)"></div>
<svg style="left:0;top:413px" width="6" height="14" viewBox="0 0 6 14"><path d="M4.4 2 L0 5.8 H4.2 M0 7 L4.4 11.6 V2" fill="none" stroke="#0a0a0a" stroke-width="1.2" stroke-linejoin="round"/></svg>
<div style="left:0;top:432px;width:5px;height:1.1px;background:#9a9a9a"></div>
<div style="left:227.5px;top:55px;width:14px;height:567px;background:#f0f0f0"></div>
<div style="left:240.9px;top:55px;width:2px;height:567px;background:#a6a6ad"></div>
<div style="left:243px;top:55px;width:17px;height:567px;background:#f0f0f0"></div>
<div style="left:249.6px;top:499px;width:1.6px;height:36px;background:#6a6a6a"></div>
<div style="left:260px;top:55px;width:5.4px;height:567px;background:#f1f1f1"></div>
<div style="left:257px;top:55px;width:1px;height:567px;background:#f6f6f6"></div>
<div style="left:259.2px;top:55px;width:1.6px;height:25px;background:#5d6c8c"></div>

<div id="menu"></div>
<div id="mlayer">
<div id="gut"></div>
<svg id="hl" viewBox="0 0 270 140" width="270" height="140"><rect x="7.1" y="110.7" width="248" height="19.2" fill="#91c9f7"/></svg>
<div class="mi dis" style="left:36.0px;top:26.3px"><span class="r" style="width:37.00px"><span style="letter-spacing:-0.71px;transform:scaleX(0.915)">元に戻す</span></span></div>
<div class="mi dis" style="left:187.3px;top:26.3px"><span class="r" style="width:28.70px"><span style="transform:scaleX(0.933)">Ctrl+Z</span></span></div>
<div class="mi dis" style="left:36.0px;top:45.5px"><span class="r" style="width:34.00px"><span style="letter-spacing:-0.80px;transform:scaleX(0.913)">やり直し</span></span></div>
<div class="mi dis" style="left:187.3px;top:45.5px"><span class="r" style="width:28.70px"><span style="transform:scaleX(0.914)">Ctrl+Y</span></span></div>
<div class="mi dis" style="left:36.0px;top:72.8px"><span class="r" style="width:46.70px"><span style="letter-spacing:-0.61px;transform:scaleX(0.915)">切り取り(T)</span></span></div>
<div class="mi dis" style="left:187.3px;top:72.8px"><span class="r" style="width:29.00px"><span style="transform:scaleX(0.923)">Ctrl+X</span></span></div>
<div class="mi dis" style="left:36.0px;top:92.4px"><span class="r" style="width:34.20px"><span style="letter-spacing:-0.80px;transform:scaleX(0.799)">コピー(C)</span></span></div>
<div class="mi dis" style="left:187.3px;top:92.4px"><span class="r" style="width:29.40px"><span style="transform:scaleX(0.918)">Ctrl+C</span></span></div>
<div class="mi" style="left:36.0px;top:111.7px"><span class="r" style="width:48.40px"><span style="letter-spacing:-0.66px;transform:scaleX(0.915)">貼り付け(P)</span></span></div>
<div class="mi" style="left:187.3px;top:111.7px"><span class="r" style="width:29.40px"><span style="transform:scaleX(0.936)">Ctrl+V</span></span></div>
<div class="mi" style="left:36.0px;top:131.4px"><span class="r" style="width:109.10px"><span style="letter-spacing:-0.35px;transform:scaleX(0.915)">所定の位置に貼り付け(A)</span></span></div>
<div class="mi dis" style="left:36.0px;top:151.0px"><span class="r" style="width:34.20px"><span style="transform:scaleX(0.902)">削除(D)</span></span></div>
<div class="mi dis" style="left:187.3px;top:151.0px"><span class="r" style="width:15.20px"><span style="transform:scaleX(0.905)">Del</span></span></div>
<div class="mi" style="left:36.0px;top:170.6px"><span class="r" style="width:65.90px"><span style="letter-spacing:-0.69px;transform:scaleX(0.915)">ガイドを削除(G)</span></span></div>
<div class="mi" style="left:36.0px;top:197.8px"><span class="r" style="width:59.20px"><span style="letter-spacing:-0.40px;transform:scaleX(0.915)">すべて選択(S)</span></span></div>
<div class="mi" style="left:187.3px;top:197.8px"><span class="r" style="width:30.40px"><span style="transform:scaleX(0.968)">Ctrl+A</span></span></div>
<div class="mi dis" style="left:36.0px;top:217.4px"><span class="r" style="width:40.00px"><span style="letter-spacing:-0.44px;transform:scaleX(0.915)">選択 なし</span></span></div>
<div class="mi dis" style="left:187.3px;top:217.4px"><span class="r" style="width:28.70px"><span style="transform:scaleX(0.933)">Ctrl+T</span></span></div>
<div class="mi" style="left:36.0px;top:236.6px"><span class="r" style="width:49.40px"><span style="letter-spacing:-0.22px;transform:scaleX(0.915)">選択を反転</span></span></div>
<div class="mi" style="left:187.3px;top:236.6px"><span class="r" style="width:55.00px"><span style="transform:scaleX(0.983)">Ctrl+Shift+I</span></span></div>
<div class="mi dis" style="left:36.0px;top:264.2px"><span class="r" style="width:46.70px"><span style="transform:scaleX(0.951)">非表示(H)</span></span></div>
<div class="mi" style="left:36.0px;top:283.7px"><span class="r" style="width:33.20px"><span style="transform:scaleX(0.890)">表示(E)</span></span></div>
<svg class="arr" style="left:240px;top:287.9px" width="8" height="10" viewBox="0 0 8 10"><path d="M2.4 2.5 L5.1 5 L2.4 7.5" fill="none" stroke="#3c3c3c" stroke-width="1.05"/></svg>
<div class="mi dis" style="left:36.0px;top:311.0px"><span class="r" style="width:34.20px"><span style="letter-spacing:-0.80px;transform:scaleX(0.885)">ロック(L)</span></span></div>
<div class="mi" style="left:36.0px;top:330.2px"><span class="r" style="width:56.80px"><span style="letter-spacing:-0.62px;transform:scaleX(0.915)">ロック解除(K)</span></span></div>
<svg class="arr" style="left:240px;top:334.4px" width="8" height="10" viewBox="0 0 8 10"><path d="M2.4 2.5 L5.1 5 L2.4 7.5" fill="none" stroke="#3c3c3c" stroke-width="1.05"/></svg>
<div class="mi" style="left:36.0px;top:357.8px"><span class="r" style="width:104.00px"><span style="letter-spacing:-0.80px;transform:scaleX(0.898)">コンポーネントを作成(B)...</span></span></div>
<div class="mi" style="left:187.3px;top:357.8px"><span class="r" style="width:7.70px"><span style="transform:scaleX(0.885)">G</span></span></div>
<div class="mi" style="left:36.0px;top:377.0px"><span class="r" style="width:59.50px"><span style="letter-spacing:-0.80px;transform:scaleX(0.870)">グループを作成</span></span></div>
<div class="mi dis" style="left:36.0px;top:396.2px"><span class="r" style="width:138.80px"><span style="letter-spacing:-0.80px;transform:scaleX(0.877)">グループ/コンポーネントを閉じる(O)</span></span></div>
<div class="mi dis" style="left:36.0px;top:423.9px"><span class="r" style="width:100.00px"><span style="letter-spacing:-0.60px;transform:scaleX(0.915)">Trimble Creatorへコピー</span></span></div>
<div class="mi" style="left:36.0px;top:451.9px"><span class="r" style="width:48.40px"><span style="letter-spacing:-0.22px;transform:scaleX(0.915)">面を交差(I)</span></span></div>
<svg class="arr" style="left:240px;top:456.1px" width="8" height="10" viewBox="0 0 8 10"><path d="M2.4 2.5 L5.1 5 L2.4 7.5" fill="none" stroke="#3c3c3c" stroke-width="1.05"/></svg>
<div class="mi" style="left:36.0px;top:478.9px"><span class="r" style="width:37.20px"><span style="letter-spacing:-0.54px;transform:scaleX(0.915)">選択なし</span></span></div>
<svg class="arr" style="left:240px;top:483.1px" width="8" height="10" viewBox="0 0 8 10"><path d="M2.4 2.5 L5.1 5 L2.4 7.5" fill="none" stroke="#3c3c3c" stroke-width="1.05"/></svg>
<div class="sep" style="top:66.9px"></div>
<div class="sep" style="top:191.7px"></div>
<div class="sep" style="top:257.7px"></div>
<div class="sep" style="top:305.0px"></div>
<div class="sep" style="top:351.6px"></div>
<div class="sep" style="top:418.2px"></div>
<div class="sep" style="top:445.9px"></div>
<div class="sep" style="top:473.3px"></div>
<svg style="left:110px;top:117px" width="16" height="22" viewBox="0 0 16 22"><defs><linearGradient id="cg" x1="0" y1="0" x2="1" y2="1"><stop offset="0" stop-color="#fff"/><stop offset="1" stop-color="#dcdcdc"/></linearGradient></defs><path d="M2.3 2.3 L2.3 16.9 L5.7 13.6 L7.9 18.7 L9.8 17.9 L7.7 12.9 L12.7 12.6 Z" fill="url(#cg)" stroke="#16223c" stroke-width="1" stroke-linejoin="miter"/></svg>

<svg id="redsvg" style="left:0;top:95px" width="270" height="50" viewBox="0 95 270 50">
<defs>
<linearGradient id="rin" x1="0" y1="0" x2="0" y2="1"><stop offset="0" stop-color="#32506e" stop-opacity=".36"/><stop offset=".18" stop-color="#32506e" stop-opacity=".2"/><stop offset=".36" stop-color="#32506e" stop-opacity="0"/><stop offset=".68" stop-color="#32506e" stop-opacity="0"/><stop offset="1" stop-color="#32506e" stop-opacity=".16"/></linearGradient>
<linearGradient id="rinx" x1="0" y1="0" x2="1" y2="0"><stop offset="0" stop-color="#32506e" stop-opacity=".22"/><stop offset=".015" stop-color="#32506e" stop-opacity="0"/><stop offset=".985" stop-color="#32506e" stop-opacity="0"/><stop offset="1" stop-color="#32506e" stop-opacity=".12"/></linearGradient>
<filter id="rsh" x="-5%" y="-20%" width="110%" height="150%"><feGaussianBlur stdDeviation="0.9"/></filter>
</defs>
<rect x="30" y="111.5" width="209" height="19.6" rx="2.4" fill="url(#rin)"/>
<rect x="30" y="111.5" width="209" height="19.6" rx="2.4" fill="url(#rinx)"/>
<rect x="28.9" y="110.4" width="213" height="23.9" rx="4.4" fill="none" stroke="#000" stroke-opacity=".26" stroke-width="4.4" filter="url(#rsh)"/>
<rect x="28.0" y="109.25" width="213" height="23.8" rx="4.4" fill="none" stroke="#fc0000" stroke-width="4.5"/>
</svg>
</div>
</div>
</body>
</html>
